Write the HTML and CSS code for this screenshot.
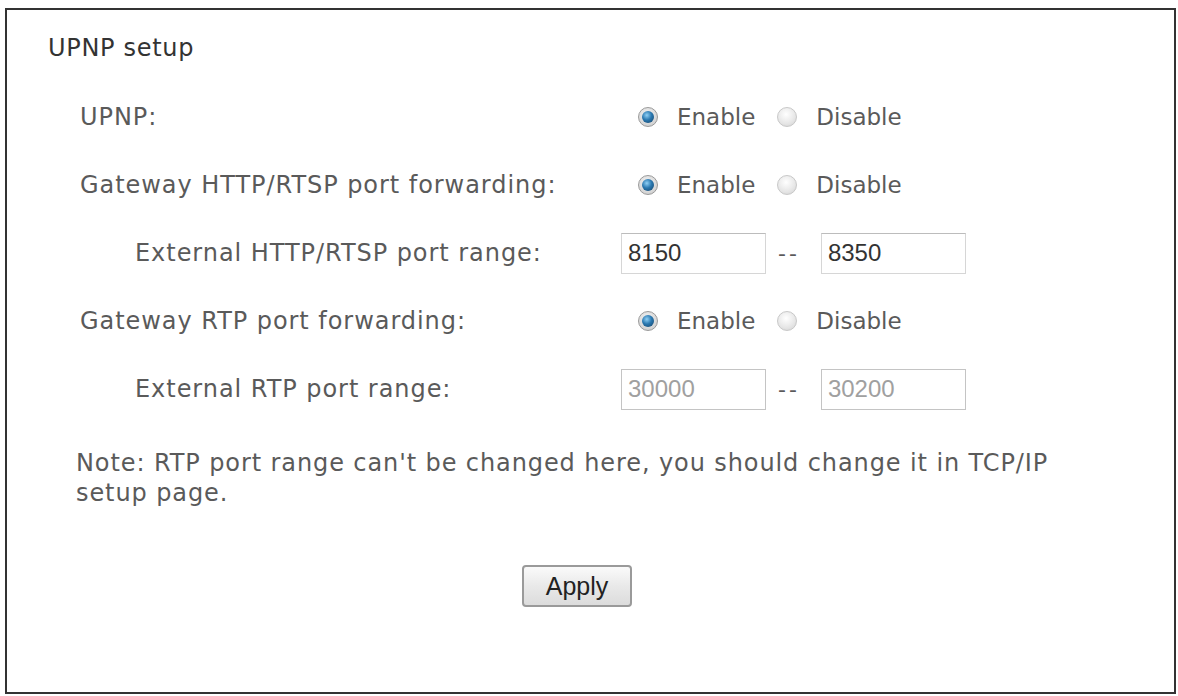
FILE: index.html
```html
<!DOCTYPE html>
<html lang="en">
<head>
    <meta charset="UTF-8">
    <title>UPNP setup</title>
    <link rel="stylesheet" href="styles.css">
</head>
<body>
    <div class="panel">
        <h2 class="panel-title">UPNP setup</h2>

        <div class="form">
            <!-- UPNP on/off -->
            <div class="row">
                <span class="label">UPNP:</span>
                <div class="radios">
                    <label class="radio"><span class="dot on"></span>Enable</label>
                    <label class="radio"><span class="dot"></span>Disable</label>
                </div>
            </div>

            <div class="row">
                <span class="label">Gateway HTTP/RTSP port forwarding:</span>
                <div class="radios">
                    <label class="radio"><span class="dot on"></span>Enable</label>
                    <label class="radio"><span class="dot"></span>Disable</label>
                </div>
            </div>

            <div class="row sub">
                <span class="label">External HTTP/RTSP port range:</span>
                <div class="range">
                    <input class="port" type="text" value="8150">
                    <span class="sep">--</span>
                    <input class="port" type="text" value="8350">
                </div>
            </div>

            <div class="row">
                <span class="label">Gateway RTP port forwarding:</span>
                <div class="radios">
                    <label class="radio"><span class="dot on"></span>Enable</label>
                    <label class="radio"><span class="dot"></span>Disable</label>
                </div>
            </div>

            <div class="row sub">
                <span class="label">External RTP port range:</span>
                <div class="range">
                    <input class="port" type="text" value="30000" disabled>
                    <span class="sep">--</span>
                    <input class="port" type="text" value="30200" disabled>
                </div>
            </div>
        </div>

        <p class="note">Note: RTP port range can't be changed here, you should change it in TCP/IP setup page.</p>

        <div class="actions">
            <button class="btn" type="button">Apply</button>
        </div>
    </div>
</body>
</html>
```

FILE: styles.css
```css
/* Basic Reset */
* {
    margin: 0;
    padding: 0;
    box-sizing: border-box;
}

body {
    background: #fff;
    color: #5a5a5a;
    font-family: 'DejaVu Sans', Verdana, sans-serif;
}

/* Outer frame */
.panel {
    margin: 8px 0 0 5px;
    width: 1171px;
    height: 686px;
    border: 2px solid #333;
    padding: 23px 0 0 41px;
}

.panel-title {
    font-size: 24px;
    font-weight: normal;
    line-height: 30px;
    color: #333;
    letter-spacing: 0.7px;
}

/* Form rows */
.form {
    margin-top: 20px;
    padding-left: 32px;
}

.row {
    display: grid;
    grid-template-columns: 541px 1fr;
    align-items: center;
    height: 68px;
}

.label {
    font-size: 24px;
    letter-spacing: 0.95px;
}

.row.sub .label {
    padding-left: 55px;
}

/* Radio buttons */
.radios {
    display: flex;
    align-items: center;
    margin-left: 17px;
}

.radio {
    display: flex;
    align-items: center;
    font-size: 23px;
    margin-right: 22px;
}

.dot {
    width: 20px;
    height: 20px;
    border-radius: 50%;
    border: 1px solid #c8c8c8;
    background: radial-gradient(circle at 45% 35%, #ffffff 0%, #e6e6e6 60%, #cfcfcf 100%);
    margin-right: 19px;
    position: relative;
}

.dot.on {
    border-color: #9a9a9a;
    background: radial-gradient(circle at 45% 35%, #f2f2f2 0%, #c8c8c8 100%);
}

.dot.on::after {
    content: "";
    position: absolute;
    top: 3px;
    left: 3px;
    width: 12px;
    height: 12px;
    border-radius: 50%;
    background: radial-gradient(circle at 40% 35%, #8fd0f5 0%, #2a78b0 45%, #143f63 100%);
}

/* Port range inputs */
.range {
    display: flex;
    align-items: center;
}

.port {
    width: 145px;
    height: 41px;
    border: 1px solid #d6d6d6;
    border-top-color: #bcbcbc;
    background: #fff;
    padding: 0 6px;
    font-family: 'Liberation Sans', Arial, sans-serif;
    font-size: 24px;
    color: #333;
    outline: none;
}

.port:disabled {
    border-color: #c4c4c4;
    color: #a0a0a0;
    background: #fff;
}

.sep {
    font-size: 22px;
    letter-spacing: 3px;
    margin: 0 21px 0 12px;
}

/* Note */
.note {
    margin-top: 25px;
    padding-left: 28px;
    width: 1060px;
    font-size: 24px;
    line-height: 30px;
    letter-spacing: 0.9px;
}

/* Apply button */
.actions {
    margin-top: 57px;
    margin-left: 32px;
    width: 994px;
    text-align: center;
}

.btn {
    width: 110px;
    height: 42px;
    border: 2px solid #9a9a9a;
    border-radius: 4px;
    background: linear-gradient(#fafafa, #e9e9e9 50%, #dcdcdc);
    font-family: 'Liberation Sans', Arial, sans-serif;
    font-size: 25px;
    color: #222;
    cursor: pointer;
}
```
